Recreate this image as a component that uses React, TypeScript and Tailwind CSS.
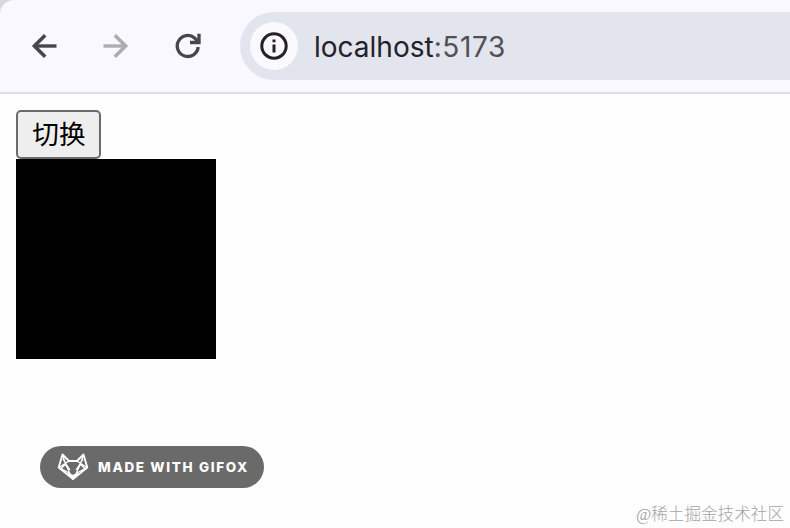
function BackIcon() {
  return (
    <svg className="h-6 w-6 overflow-visible" viewBox="0 0 24 24" fill="none" stroke="currentColor" strokeWidth="3.6">
      <path d="M24.5 12H3" strokeWidth="3.4" />
      <path d="M13.2 1.2L2.4 12L13.2 22.8" />
    </svg>
  );
}

function ReloadIcon() {
  return (
    <svg className="h-7 w-7" viewBox="0 0 28 28" fill="none" stroke="currentColor" strokeWidth="3.3">
      <path d="M24.2 15A10.5 10.5 0 1 1 20.8 6.2L23.5 9" />
      <path d="M25 1.8V10.5H16" />
    </svg>
  );
}

function InfoIcon() {
  return (
    <svg className="h-7 w-7" viewBox="0 0 28 28" fill="none" stroke="currentColor" strokeWidth="3">
      <circle cx="14" cy="14" r="12.2" />
      <path d="M14 12.5V20.5M14 7.5V10.3" />
    </svg>
  );
}

function FoxIcon() {
  return (
    <svg className="h-7 w-8" viewBox="0 0 32 28" fill="none" stroke="white" strokeWidth="1.3" strokeLinejoin="round">
      <path d="M5.5 1.5L12 8H20L26.5 1.5L30.3 14.5L16 26L1.7 14.5Z" strokeWidth="1.9" />
      <path d="M5.5 2L9 12L14 23M26.5 2L23 12L18 23M12 8L2 14.5M20 8L30 14.5M9 11L4 15.5L12 20M23 11L28 15.5L20 20M6 6L9 11L13 17M26 6L23 11L19 17" />
      <path d="M11.5 20.5L16 22.5L20.5 20.5L16 26Z" fill="white" />
    </svg>
  );
}

export default function App() {
  return (
    <div className="flex h-[528px] w-[790px] flex-col overflow-hidden bg-[#fefefe] font-['Inter','Noto_Sans_CJK_SC',sans-serif]">
      <div className="h-[94px] shrink-0 bg-[#d5d7e4]">
        <header className="flex h-[94px] items-center rounded-tl-[14px] border-b-2 border-[#dedee9] bg-[#f8f8fe] pl-8 text-[#47474b]">
          <BackIcon />
          <span className="ml-12 flex rotate-180 text-[#adadb0]"><BackIcon /></span>
          <span className="ml-[46px] flex"><ReloadIcon /></span>
          <div className="ml-[38px] flex h-[68px] flex-1 items-center rounded-l-full bg-[#e2e4ee] pl-[10px]">
            <span className="flex h-12 w-12 items-center justify-center rounded-full bg-[#f9f9fe] text-[#242127]"><InfoIcon /></span>
            <span className="ml-4 pt-px text-[28px] leading-9 text-[#242127]">localhost<span className="tracking-[0.6px] text-[#515154]">:5173</span></span>
          </div>
        </header>
      </div>
      <main className="flex flex-1 flex-col items-start pt-4 pl-4">
        <button className="flex h-[49px] w-[85px] items-center justify-center rounded-[5px] border-2 border-[#6b6b6b] bg-[#eeeeee] pl-px text-[26.67px] leading-none text-black">切换</button>
        <div className="h-[200px] w-[200px] bg-black" />
        <div className="mt-[87px] ml-6 flex h-[42px] w-56 items-center rounded-full bg-[#6a6a6a] pl-[17px] text-white">
          <FoxIcon />
          <span className="ml-[9px] whitespace-nowrap pt-px text-[13.5px] font-extrabold tracking-[1.65px]">MADE WITH GIFOX</span>
        </div>
        <footer className="mt-[15px] mr-[6px] self-end font-['Liberation_Serif','Noto_Sans_CJK_SC',serif] text-[16.6px] leading-6 font-light whitespace-nowrap text-[#a5a5a9]">@稀土掘金技术社区</footer>
      </main>
    </div>
  );
}
